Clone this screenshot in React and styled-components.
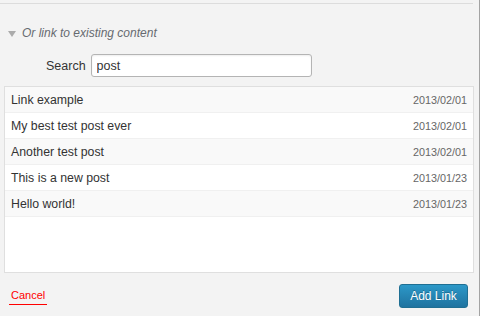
import React from 'react'
import styled, { createGlobalStyle } from 'styled-components';

const GlobalStyle = createGlobalStyle`
    html, body {
        margin: 0;
        padding: 0;
        background: #f3f3f3;
        font-family: Arial, "Liberation Sans", sans-serif;
    }
`

const results = [
    { title: 'Link example', date: '2013/02/01' },
    { title: 'My best test post ever', date: '2013/02/01' },
    { title: 'Another test post', date: '2013/02/01' },
    { title: 'This is a new post', date: '2013/01/23' },
    { title: 'Hello world!', date: '2013/01/23' },
];

function App() {
    return (
        <>
            <GlobalStyle />
            <Dialog>
                <Divider />
                <Toggle>
                    <Arrow />
                    <span>Or link to existing content</span>
                </Toggle>
                <SearchRow>
                    <label htmlFor="search-field">Search</label>
                    <SearchInput id="search-field" defaultValue="post" />
                </SearchRow>
                <ResultList>
                    {results.map((item, i) => (
                        <ResultRow key={item.title} $alternate={i % 2 === 0}>
                            <span>{item.title}</span>
                            <DateLabel>{item.date}</DateLabel>
                        </ResultRow>
                    ))}
                </ResultList>
                <Footer>
                    <CancelLink href="#">Cancel</CancelLink>
                    <SubmitButton>Add Link</SubmitButton>
                </Footer>
            </Dialog>
        </>
    )
}

export default App;

const Dialog = styled.div`
    width: 480px;
    height: 316px;
    box-sizing: border-box;
    border-right: 1px solid #a3a3a3;
    padding-top: 3px;
`

const Divider = styled.div`
    width: 473px;
    height: 1px;
    background: #dcdcdc;
`

const Toggle = styled.div`
    display: flex;
    align-items: center;
    height: 16px;
    margin-top: 21px;
    padding-left: 8px;

    span {
        font-size: 12px;
        font-style: italic;
        color: #666a70;
    }
`

const Arrow = styled.div`
    width: 0;
    height: 0;
    border-left: 4px solid transparent;
    border-right: 4px solid transparent;
    border-top: 6px solid #ababab;
    margin-right: 6px;
    margin-top: 1px;
`

const SearchRow = styled.div`
    display: flex;
    align-items: center;
    margin-top: 13px;
    padding-left: 46px;

    label {
        font-size: 12.5px;
        color: #333;
        margin-right: 5px;
    }
`

const SearchInput = styled.input`
    width: 221px;
    height: 23px;
    box-sizing: border-box;
    border: 1px solid #b4b4b4;
    border-radius: 3px;
    box-shadow: inset 0 1px 2px rgba(0, 0, 0, 0.07);
    background: #fff;
    padding: 0 5px;
    font-family: Arial, "Liberation Sans", sans-serif;
    font-size: 12.5px;
    color: #333;
    outline: none;
`

const ResultList = styled.div`
    margin: 9px 0 0 4px;
    width: 470px;
    height: 187px;
    box-sizing: border-box;
    background: #fff;
    border: 1px solid #dfdfdf;
`

const ResultRow = styled.div`
    display: flex;
    justify-content: space-between;
    align-items: center;
    height: 26px;
    box-sizing: border-box;
    padding: 0 6px 0 6px;
    border-bottom: 1px solid #f0f0f0;
    background: ${props => props.$alternate ? '#f9f9f9' : '#fff'};
    font-size: 12.3px;
    color: #333;
`

const DateLabel = styled.span`
    font-size: 10.8px;
    color: #666;
`

const Footer = styled.div`
    display: flex;
    justify-content: space-between;
    align-items: center;
    margin-top: 11px;
    padding: 0 11px 0 9px;
`

const CancelLink = styled.a`
    font-size: 11px;
    color: #f00;
    text-decoration: none;
    padding: 0 2px 3px;
    border-bottom: 1px solid #f00;
    margin-top: 2px;
`

const SubmitButton = styled.button`
    width: 69px;
    height: 24px;
    box-sizing: border-box;
    border: 1px solid #1f6f93;
    border-radius: 3px;
    background: linear-gradient(to bottom, #2c98c8, #1f73a0);
    color: #fff;
    font-family: Arial, "Liberation Sans", sans-serif;
    font-size: 12px;
    text-shadow: 0 -1px 0 rgba(0, 0, 0, 0.25);
    padding: 0;
    cursor: pointer;
`
